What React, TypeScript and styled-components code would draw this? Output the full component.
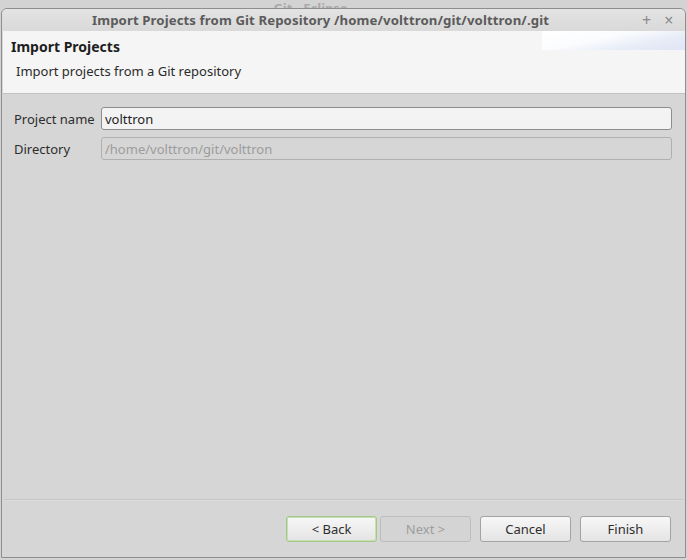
import React, { useState } from "react";
import styled, { createGlobalStyle } from "styled-components";

const GlobalStyle = createGlobalStyle`
  html, body {
    margin: 0;
    padding: 0;
    background: #d3d3d3;
    font-family: "Noto Sans", "DejaVu Sans", sans-serif;
  }
  * { box-sizing: border-box; }
`;

const Desktop = styled.div`
  width: 687px;
  height: 560px;
  overflow: hidden;
  background: #d3d3d3;
`;

const BackTitle = styled.div`
  height: 8px;
  overflow: hidden;
  text-align: center;
  font-size: 13px;
  font-weight: bold;
  line-height: 16px;
  color: #a9a9a9;
  padding-right: 66px;
`;

const Window = styled.div`
  margin-left: 1px;
  width: 685px;
  height: 550px;
  border: 1px solid #8e8e8e;
  border-radius: 6px 6px 0 0;
  display: flex;
  flex-direction: column;
  background: #d6d6d6;
  overflow: hidden;
`;

const TitleBar = styled.div`
  height: 22px;
  display: flex;
  align-items: center;
  background: linear-gradient(#e3e3e3, #d9d9d9);
`;

const TitleText = styled.div`
  flex: 1;
  text-align: center;
  font-size: 13.2px;
  font-weight: bold;
  color: #5b5b5b;
  letter-spacing: 0.1px;
`;

const TitleButtons = styled.div`
  width: 46px;
  display: flex;
  gap: 13px;
  color: #8a8a8a;
  font-size: 16px;
  line-height: 1;
  padding-left: 3px;
`;

const Header = styled.div`
  position: relative;
  height: 63px;
  margin-left: 1px;
  background: #f5f5f5;
  border-bottom: 1px solid #c2c2c2;
  padding: 6px 0 0 8px;
`;

const Banner = styled.div`
  position: absolute;
  top: 0;
  right: 0;
  width: 143px;
  height: 19px;
  background: linear-gradient(168deg, #ffffff 0%, #fbfcfe 40%, #e7ecf7 70%, #dfe5f5 100%);
`;

const HeaderTitle = styled.div`
  font-size: 14px;
  font-weight: bold;
  color: #1e1e1e;
  line-height: 20px;
`;

const HeaderDesc = styled.div`
  margin: 4px 0 0 5px;
  font-size: 13px;
  color: #2b2b2b;
  line-height: 20px;
`;

const Body = styled.div`
  flex: 1;
  padding: 13px 13px 0 12px;
  display: flex;
  flex-direction: column;
  gap: 7px;
`;

const Row = styled.div`
  display: grid;
  grid-template-columns: 87px 1fr;
  align-items: center;
`;

const Label = styled.label`
  font-size: 13px;
  color: #2d2d2d;
`;

const Field = styled.input<{ $disabled?: boolean }>`
  height: 23px;
  width: 100%;
  border: 1px solid ${(p) => (p.$disabled ? "#b0b0b0" : "#8d8d8d")};
  border-radius: 3px;
  background: ${(p) => (p.$disabled ? "#d6d6d6" : "#f3f3f3")};
  color: ${(p) => (p.$disabled ? "#9c9c9c" : "#1e1e1e")};
  font-family: inherit;
  font-size: 13px;
  padding: 0 3px;
  outline: none;
`;

const Separator = styled.div`
  margin: 0 2px 0 2px;
  height: 2px;
  background: #c6c6c6;
  border-bottom: 1px solid #dcdcdc;
`;

const Footer = styled.div`
  height: 56px;
  display: flex;
  justify-content: flex-end;
  align-items: flex-start;
  padding: 15px 14px 0 0;
`;

const Button = styled.button<{ $focus?: boolean; $gap?: number }>`
  width: 91px;
  height: 26px;
  margin-left: ${(p) => p.$gap ?? 9}px;
  border: 1px solid ${(p) => (p.$focus ? "#a2c987" : "#a3a3a3")};
  box-shadow: ${(p) => (p.$focus ? "inset 0 0 0 1px #c6dfb2" : "none")};
  border-radius: 3px;
  background: linear-gradient(#f7f7f7, #e4e4e4);
  color: #2e2e2e;
  font-family: inherit;
  font-size: 13px;
  padding: 0;
  &:disabled {
    background: #d4d4d4;
    border-color: #bdbdbd;
    color: #9d9d9d;
  }
`;

const App = () => {
  const [name, setName] = useState("volttron");

  return (
    <Desktop>
      <GlobalStyle />
      <BackTitle>Git - Eclipse</BackTitle>
      <Window>
        <TitleBar>
          <TitleText>Import Projects from Git Repository /home/volttron/git/volttron/.git</TitleText>
          <TitleButtons>
            <span>+</span>
            <span>×</span>
          </TitleButtons>
        </TitleBar>
        <Header>
          <Banner />
          <HeaderTitle>Import Projects</HeaderTitle>
          <HeaderDesc>Import projects from a Git repository</HeaderDesc>
        </Header>
        <Body>
          <Row>
            <Label htmlFor="pname">Project name</Label>
            <Field id="pname" value={name} onChange={(e) => setName(e.target.value)} />
          </Row>
          <Row>
            <Label htmlFor="dir">Directory</Label>
            <Field id="dir" $disabled readOnly value="/home/volttron/git/volttron" />
          </Row>
        </Body>
        <Separator />
        <Footer>
          <Button $focus>&lt; Back</Button>
          <Button $gap={3} disabled>
            Next &gt;
          </Button>
          <Button>Cancel</Button>
          <Button>Finish</Button>
        </Footer>
      </Window>
    </Desktop>
  );
};

export default App;
